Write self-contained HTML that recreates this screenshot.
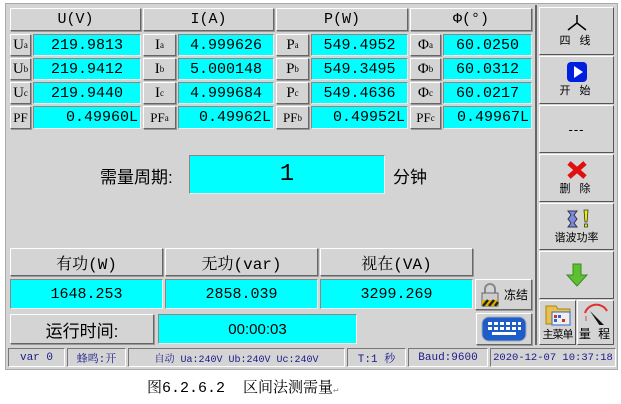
<!DOCTYPE html>
<html><head><meta charset="utf-8"><style>
*{margin:0;padding:0;box-sizing:border-box}
body{width:621px;height:404px;background:#fff;position:relative;overflow:hidden;font-family:"Liberation Serif","Noto Serif CJK SC",serif;color:#000}
.a{position:absolute}
.frame{left:5px;top:3px;width:613px;height:367px;background:#d4d4d4;border:1px solid #aaa}
.b{position:absolute;background:#d4d4d4;border:1px solid;border-color:#fff #666 #666 #fff;box-shadow:1px 1px 0 #999;display:flex;align-items:center;justify-content:center;font-size:15px;white-space:nowrap;font-family:"Liberation Mono","Noto Serif CJK SC",monospace}
.c{position:absolute;background:#00ffff;border:1px solid;border-color:#888 #eee #eee #888;display:flex;align-items:center;justify-content:center;font-size:15px;font-family:"Liberation Mono","Noto Serif CJK SC",monospace;white-space:nowrap}
.pf{justify-content:flex-end;padding-right:2px;font-size:15px;letter-spacing:0}
.l{font-size:15px;font-family:"Liberation Serif",serif}
sub{font-size:9px;vertical-align:-1px}
.s{position:absolute;top:348px;height:19px;border:1px solid;border-color:#777 #fff #fff #777;font-size:11px;color:#1a1a8a;display:flex;align-items:center;justify-content:center;font-family:"Liberation Mono","Noto Serif CJK SC",monospace;white-space:nowrap}
.rb{position:absolute;left:539px;width:75px;background:#d4d4d4;border:1px solid;border-color:#fff #555 #555 #fff;display:flex;flex-direction:column;align-items:center;justify-content:center;font-size:11px;font-family:"Liberation Sans","Noto Sans CJK SC",sans-serif;letter-spacing:3px;white-space:nowrap}
</style></head><body>
<div class="a frame"></div>
<div class="a" style="left:535px;top:5px;width:2px;height:340px;background:#666"></div>
<div class="b" style="left:10px;top:8px;width:131px;height:23px">U(V)</div>
<div class="b" style="left:143px;top:8px;width:131px;height:23px">I(A)</div>
<div class="b" style="left:276px;top:8px;width:132px;height:23px">P(W)</div>
<div class="b" style="left:410px;top:8px;width:122px;height:23px">Φ(°)</div>

<div class="b l" style="left:10px;top:34px;width:21px;height:22px">U<sub>a</sub></div>
<div class="c" style="left:33px;top:34px;width:108px;height:22px">219.9813</div>
<div class="b l" style="left:143px;top:34px;width:33px;height:22px">I<sub>a</sub></div>
<div class="c" style="left:178px;top:34px;width:96px;height:22px">4.999626</div>
<div class="b l" style="left:276px;top:34px;width:33px;height:22px">P<sub>a</sub></div>
<div class="c" style="left:311px;top:34px;width:97px;height:22px">549.4952</div>
<div class="b l" style="left:410px;top:34px;width:31px;height:22px">Φ<sub>a</sub></div>
<div class="c" style="left:443px;top:34px;width:89px;height:22px">60.0250</div>

<div class="b l" style="left:10px;top:58px;width:21px;height:22px">U<sub>b</sub></div>
<div class="c" style="left:33px;top:58px;width:108px;height:22px">219.9412</div>
<div class="b l" style="left:143px;top:58px;width:33px;height:22px">I<sub>b</sub></div>
<div class="c" style="left:178px;top:58px;width:96px;height:22px">5.000148</div>
<div class="b l" style="left:276px;top:58px;width:33px;height:22px">P<sub>b</sub></div>
<div class="c" style="left:311px;top:58px;width:97px;height:22px">549.3495</div>
<div class="b l" style="left:410px;top:58px;width:31px;height:22px">Φ<sub>b</sub></div>
<div class="c" style="left:443px;top:58px;width:89px;height:22px">60.0312</div>

<div class="b l" style="left:10px;top:82px;width:21px;height:22px">U<sub>c</sub></div>
<div class="c" style="left:33px;top:82px;width:108px;height:22px">219.9440</div>
<div class="b l" style="left:143px;top:82px;width:33px;height:22px">I<sub>c</sub></div>
<div class="c" style="left:178px;top:82px;width:96px;height:22px">4.999684</div>
<div class="b l" style="left:276px;top:82px;width:33px;height:22px">P<sub>c</sub></div>
<div class="c" style="left:311px;top:82px;width:97px;height:22px">549.4636</div>
<div class="b l" style="left:410px;top:82px;width:31px;height:22px">Φ<sub>c</sub></div>
<div class="c" style="left:443px;top:82px;width:89px;height:22px">60.0217</div>

<div class="b l" style="left:10px;top:106px;width:21px;height:23px;font-size:13px">PF</div>
<div class="c pf" style="left:33px;top:106px;width:108px;height:23px">0.49960L</div>
<div class="b l" style="left:143px;top:106px;width:33px;height:23px;font-size:13px">PF<sub>a</sub></div>
<div class="c pf" style="left:178px;top:106px;width:96px;height:23px">0.49962L</div>
<div class="b l" style="left:276px;top:106px;width:33px;height:23px;font-size:13px">PF<sub>b</sub></div>
<div class="c pf" style="left:311px;top:106px;width:97px;height:23px">0.49952L</div>
<div class="b l" style="left:410px;top:106px;width:31px;height:23px;font-size:13px">PF<sub>c</sub></div>
<div class="c pf" style="left:443px;top:106px;width:89px;height:23px">0.49967L</div>

<div class="a" style="left:100px;top:163px;font-size:17px;font-family:'Liberation Sans','Noto Sans CJK SC',sans-serif">需量周期:</div>
<div class="c" style="left:189px;top:155px;width:196px;height:39px;font-size:24px">1</div>
<div class="a" style="left:393px;top:163px;font-size:17px;font-family:'Liberation Sans','Noto Sans CJK SC',sans-serif">分钟</div>

<div class="b" style="left:10px;top:248px;width:153px;height:28px;font-size:16px">有功(W)</div>
<div class="b" style="left:165px;top:248px;width:153px;height:28px;font-size:16px">无功(var)</div>
<div class="b" style="left:320px;top:248px;width:153px;height:28px;font-size:16px">视在(VA)</div>
<div class="c" style="left:10px;top:279px;width:153px;height:30px;font-size:15px">1648.253</div>
<div class="c" style="left:165px;top:279px;width:153px;height:30px;font-size:15px">2858.039</div>
<div class="c" style="left:320px;top:279px;width:153px;height:30px;font-size:15px">3299.269</div>
<div class="b" style="left:10px;top:314px;width:144px;height:30px;font-size:17px;font-family:'Liberation Sans','Noto Sans CJK SC',sans-serif">运行时间:</div>
<div class="c" style="left:158px;top:314px;width:199px;height:30px;font-size:15px;font-family:'Liberation Sans',sans-serif">00:00:03</div>

<div class="b" style="left:475px;top:279px;width:57px;height:31px;font-size:12px;justify-content:flex-end;padding-right:3px;font-family:'Liberation Sans','Noto Sans CJK SC',sans-serif">冻结
<svg class="a" style="left:4px;top:3px" width="20" height="24"><path d="M5 11 V6 a5 5 0 0 1 10 0 V11" fill="none" stroke="#888" stroke-width="2"/><rect x="2" y="10" width="16" height="13" fill="#ccc" stroke="#666"/><rect x="2" y="17" width="16" height="6" fill="#e0b000"/><path d="M3 23 l5 -6 M9 23 l5 -6 M15 23 l3 -4" stroke="#222" stroke-width="2.5"/></svg></div>
<div class="b" style="left:476px;top:313px;width:56px;height:32px">
<svg width="46" height="26"><rect x="1" y="1" width="44" height="24" rx="7" fill="#1e5cc8" stroke="#9ab" /><g fill="#fff"><rect x="7" y="6" width="4" height="3"/><rect x="13" y="6" width="4" height="3"/><rect x="19" y="6" width="4" height="3"/><rect x="25" y="6" width="4" height="3"/><rect x="31" y="6" width="4" height="3"/><rect x="37" y="6" width="3" height="3"/><rect x="7" y="11" width="4" height="3"/><rect x="13" y="11" width="4" height="3"/><rect x="19" y="11" width="4" height="3"/><rect x="25" y="11" width="4" height="3"/><rect x="31" y="11" width="4" height="3"/><rect x="37" y="11" width="3" height="3"/><rect x="11" y="16" width="24" height="3"/></g></svg></div>

<div class="rb" style="top:7px;height:48px"><svg width="22" height="18"><path d="M11 1 V9 L2 16 M11 9 L20 16" fill="none" stroke="#000" stroke-width="1.5"/></svg>四 线</div>
<div class="rb" style="top:56px;height:48px"><svg width="20" height="20"><rect x="0" y="0" width="20" height="20" rx="4" fill="#0020e0"/><path d="M7 4 L16 10 L7 16Z" fill="#fff"/></svg>开 始</div>
<div class="rb" style="top:105px;height:48px;font-size:13px;letter-spacing:1px">---</div>
<div class="rb" style="top:154px;height:48px"><svg width="22" height="20"><path d="M3 3 L19 17 M19 3 L3 17" stroke="#e01010" stroke-width="5"/></svg>删 除</div>
<div class="rb" style="top:203px;height:47px;letter-spacing:0"><svg width="30" height="20"><path d="M6 2 h9 l-3 4 l3 4 l-3 4 l3 4 h-9 l3 -4 l-3 -4 l3 -4z" fill="#7a8ae0" stroke="#334"/><path d="M22 1 h4 l-1 12 h-2z M22.5 15 h3 v3 h-3z" fill="#ee0" stroke="#333" stroke-width=".8"/></svg>谐波功率</div>
<div class="rb" style="top:251px;height:48px"><svg width="22" height="24"><path d="M7 1 h8 v11 h6 L11 23 L1 12 h6z" fill="#5cc030" stroke="#3a8a20"/></svg></div>
<div class="rb" style="top:300px;left:539px;width:37px;height:45px;letter-spacing:-1px;justify-content:flex-end;padding-bottom:2px;font-size:11px"><svg width="28" height="24"><path d="M2 4 h10 l2 3 h12 v15 h-24z" fill="#e8c050" stroke="#a80"/><rect x="8" y="10" width="18" height="13" fill="#eee" stroke="#36c"/><g fill="#c33"><rect x="10" y="13" width="3" height="3"/><rect x="18" y="17" width="3" height="3"/></g><g fill="#36c"><rect x="14" y="13" width="3" height="3"/><rect x="10" y="17" width="3" height="3"/></g></svg>主菜单</div>
<div class="rb" style="top:300px;left:577px;width:37px;height:45px;letter-spacing:2px;justify-content:flex-end;padding-bottom:2px;font-size:12px"><svg width="28" height="26"><path d="M3 12 A12 12 0 0 1 25 10" fill="none" stroke="#e03030" stroke-width="2"/><path d="M8 10 L22 24 L18 25 Z" fill="#111"/><text x="3" y="20" font-size="7" fill="#c00">I</text></svg>量 程</div>

<div class="s" style="left:8px;width:57px">var 0</div>
<div class="s" style="left:67px;width:59px">蜂鸣:开</div>
<div class="s" style="left:128px;width:217px;font-size:10px">自动 Ua:240V Ub:240V Uc:240V</div>
<div class="s" style="left:347px;width:59px">T:1 秒</div>
<div class="s" style="left:408px;width:80px">Baud:9600</div>
<div class="s" style="left:490px;width:126px;font-size:10.5px">2020-12-07 10:37:18</div>

<div class="a" style="left:147px;top:376px;font-size:15px;font-family:'Liberation Mono','Noto Serif CJK SC',monospace;white-space:nowrap">图6.2.6.2&nbsp;&nbsp;区间法测需量<span style="font-size:9px;color:#888">↵</span></div>
</body></html>
